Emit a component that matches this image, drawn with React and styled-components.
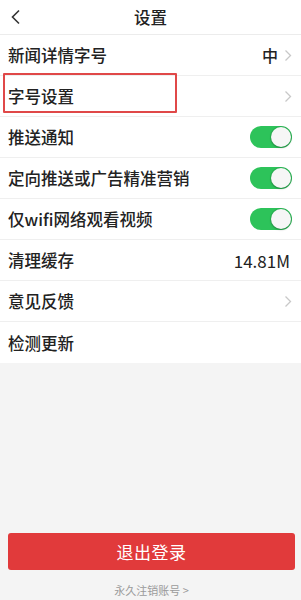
import React from "react";
import styled, { createGlobalStyle } from "styled-components";

const Global = createGlobalStyle`
  html, body { margin: 0; padding: 0; background: #f4f4f4; }
  body { font-family: "Noto Sans CJK SC", "Noto Sans", sans-serif; color: #222; }
  * { box-sizing: border-box; }
`;

const Page = styled.div`
  width: 301px;
  height: 600px;
  display: flex;
  flex-direction: column;
  background: #f4f4f4;
  overflow: hidden;
`;

const Header = styled.div`
  height: 35px;
  background: #fff;
  border-bottom: 1px solid #ececec;
  display: grid;
  grid-template-columns: 40px 1fr 40px;
  align-items: center;
`;

const BackBtn = styled.div`
  display: flex;
  align-items: center;
  padding-left: 10px;
`;

const Title = styled.div`
  text-align: center;
  font-size: 16.5px;
  font-weight: 500;
  color: #222;
`;

const List = styled.div`
  background: #fff;
`;

const Row = styled.div`
  position: relative;
  height: 41px;
  padding: 0 9px 0 8px;
  display: flex;
  align-items: center;
  justify-content: space-between;
  border-bottom: ${(p) => (p.$last ? "none" : "1px solid #efefef")};
`;

const Label = styled.span`
  font-size: 16.5px;
  font-weight: 500;
  color: #222;
`;

const Right = styled.div`
  display: flex;
  align-items: center;
  gap: 6px;
`;

const Value = styled.span`
  font-size: ${(p) => (p.$num ? "17px" : "16px")};
  font-weight: ${(p) => (p.$num ? 400 : 500)};
  color: #222;
  margin-right: ${(p) => (p.$num ? "2px" : "0")};
`;

const Highlight = styled.div`
  position: absolute;
  left: 3px;
  top: -3px;
  width: 174px;
  height: 40px;
  border: 2px solid #e04848;
  border-radius: 1px;
  pointer-events: none;
`;

const Switch = styled.div`
  width: 42px;
  height: 22px;
  border-radius: 11px;
  background: #2dc35a;
  position: relative;
  margin-right: 0;
`;

const Knob = styled.div`
  position: absolute;
  right: 1px;
  top: 1px;
  width: 20px;
  height: 20px;
  border-radius: 50%;
  background: #f6f6f6;
  box-shadow: 0 0 0 1px rgba(0,0,0,0.08), 0 1px 2px rgba(0,0,0,0.25);
`;

const Spacer = styled.div`
  flex: 1;
`;

const Footer = styled.div`
  display: flex;
  flex-direction: column;
  align-items: center;
  padding: 0 6px 0 8px;
`;

const LogoutButton = styled.button`
  width: 287px;
  height: 37px;
  border: none;
  border-radius: 3px;
  background: #e13a3b;
  color: #fff;
  font-family: inherit;
  font-size: 17px;
  letter-spacing: 0.5px;
`;

const Cancel = styled.div`
  margin-top: 12px;
  height: 16px;
  font-size: 11px;
  color: #9a9a9a;
  margin-bottom: 2px;
`;

const Chevron = () => (
  <svg width="8" height="13" viewBox="0 0 8 13">
    <path d="M1.5 1.5 L6.5 6.5 L1.5 11.5" fill="none" stroke="#c8c8c8" strokeWidth="1.3" />
  </svg>
);

const Toggle = () => (
  <Switch>
    <Knob />
  </Switch>
);

export default function App() {
  return (
    <>
      <Global />
      <Page>
        <Header>
          <BackBtn>
            <svg width="11" height="16" viewBox="0 0 11 16">
              <path d="M9 1.5 L2.5 8 L9 14.5" fill="none" stroke="#333" strokeWidth="1.6" />
            </svg>
          </BackBtn>
          <Title>设置</Title>
          <div />
        </Header>
        <List>
          <Row>
            <Label>新闻详情字号</Label>
            <Right>
              <Value>中</Value>
              <Chevron />
            </Right>
          </Row>
          <Row>
            <Highlight />
            <Label>字号设置</Label>
            <Right>
              <Chevron />
            </Right>
          </Row>
          <Row>
            <Label>推送通知</Label>
            <Toggle />
          </Row>
          <Row>
            <Label>定向推送或广告精准营销</Label>
            <Toggle />
          </Row>
          <Row>
            <Label>仅wifi网络观看视频</Label>
            <Toggle />
          </Row>
          <Row>
            <Label>清理缓存</Label>
            <Value $num>14.81M</Value>
          </Row>
          <Row>
            <Label>意见反馈</Label>
            <Right>
              <Chevron />
            </Right>
          </Row>
          <Row $last>
            <Label>检测更新</Label>
          </Row>
        </List>
        <Spacer />
        <Footer>
          <LogoutButton>退出登录</LogoutButton>
          <Cancel>永久注销账号 &gt;</Cancel>
        </Footer>
      </Page>
    </>
  );
}
